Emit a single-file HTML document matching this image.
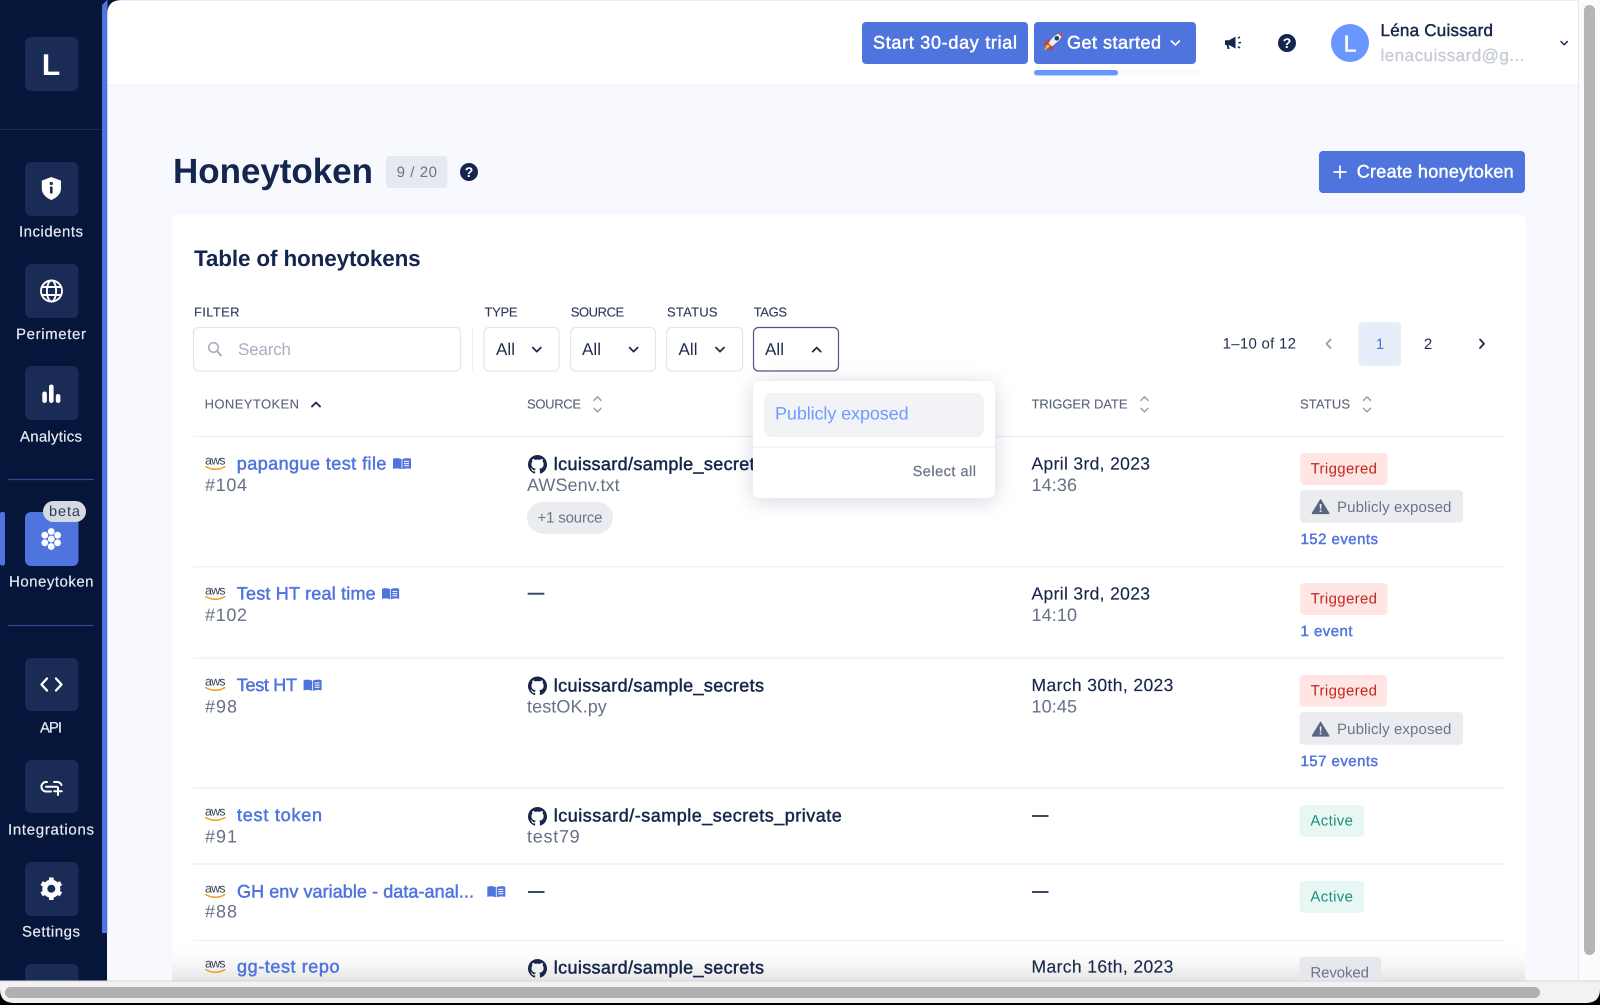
<!DOCTYPE html>
<html lang="en"><head><meta charset="utf-8"><title>Honeytoken</title>
<style>
html,body{margin:0;padding:0;background:#000;width:1600px;height:1005px;overflow:hidden}
svg{display:block}
text{font-family:"Liberation Sans",sans-serif;text-rendering:geometricPrecision}
.side{font-size:15px;fill:#e6e9f1;stroke:#e6e9f1;stroke-width:.2px}
.lab{font-size:13px;fill:#2a3858;stroke:#2a3858;stroke-width:.1px}
.th{font-size:13px;fill:#59637a;stroke:#59637a;stroke-width:.1px}
.all{font-size:17px;fill:#1f2d4d}
.name{font-size:18px;fill:#4f74de;stroke:#4f74de;stroke-width:.5px}
.repo{font-size:18px;fill:#17264a;stroke:#17264a;stroke-width:.5px}
.sub{font-size:18px;fill:#667087}
.date{font-size:17.5px;fill:#17264a;stroke:#17264a;stroke-width:.15px}
.tag{font-size:15px}
.tr{fill:#c0281f}.pe{fill:#6b7489}.ac{fill:#1b917f}
.ev{font-size:15px;fill:#4f74de;stroke:#4f74de;stroke-width:.45px}
.btn{font-size:18px;fill:#fff;stroke:#fff;stroke-width:.5px}
.ch{fill:none;stroke:#1f2d4d;stroke-width:1.8;stroke-linecap:round;stroke-linejoin:round}
.so{fill:none;stroke:#9aa1b1;stroke-width:1.5;stroke-linecap:round;stroke-linejoin:round}
.dv{stroke:#f0f1f4;stroke-width:1.5}
.dash{stroke:#3b4a6b;stroke-width:2}
</style></head><body>
<svg xmlns="http://www.w3.org/2000/svg" width="1600" height="1005" viewBox="0 0 1600 1005">
<defs>
<linearGradient id="fade" x1="0" y1="0" x2="0" y2="1"><stop offset="0" stop-color="#fff" stop-opacity="0"/><stop offset="1" stop-color="#e4e4e4" stop-opacity="1"/></linearGradient>
<filter id="sh" x="-20%" y="-30%" width="140%" height="170%"><feDropShadow dx="0" dy="3" stdDeviation="10" flood-color="#1a2850" flood-opacity=".16"/></filter>
<path id="gh" fill="#17264a" d="M8 0C3.58 0 0 3.58 0 8c0 3.54 2.29 6.53 5.47 7.59.4.07.55-.17.55-.38 0-.19-.01-.82-.01-1.49-2.01.37-2.53-.49-2.69-.94-.09-.23-.48-.94-.82-1.13-.28-.15-.68-.52-.01-.53.63-.01 1.08.58 1.23.82.72 1.21 1.87.87 2.33.66.07-.52.28-.87.51-1.07-1.78-.2-3.64-.89-3.64-3.95 0-.87.31-1.59.82-2.15-.08-.2-.36-1.02.08-2.12 0 0 .67-.21 2.2.82.64-.18 1.32-.27 2-.27.68 0 1.36.09 2 .27 1.53-1.04 2.2-.82 2.2-.82.44 1.1.16 1.92.08 2.12.51.56.82 1.27.82 2.15 0 3.07-1.87 3.75-3.65 3.95.29.25.54.73.54 1.48 0 1.07-.01 1.93-.01 2.2 0 .21.15.46.55.38A8.013 8.013 0 0016 8c0-4.42-3.58-8-8-8z"/>
<g id="book"><path fill="#4f74de" d="M0 1.2Q4.5 0 8.6 1.6V11.8Q4.5 10.2 0 11.4z"/><path fill="#4f74de" d="M9.4 1.6Q13.5 0 18 1.2V11.4Q13.5 10.2 9.4 11.8z"/><path fill="#fff" d="M11 3.4h5v1h-5zM11 5.6h5v1h-5zM11 7.8h5v1h-5z"/></g>
<path id="smile" fill="none" stroke="#f29a1f" stroke-width="1.5" stroke-linecap="round" d="M0.5 9.6Q10 15 19.5 9.6"/>
<g id="tri"><path fill="#5a6580" stroke="#5a6580" stroke-width="1.4" stroke-linejoin="round" d="M9 .8L17.2 14.4H.8z"/><path fill="#eaecf0" d="M8.1 5h1.8l-.3 5.2H8.4zM8.1 11.2h1.8v1.7H8.1z"/></g>
<g id="sort"><path class="so" d="M-3.5 -4L0 -7.5L3.5 -4"/><path class="so" d="M-3.5 4L0 7.5L3.5 4"/></g>
<path id="down" class="ch" d="M-4 -2L0 2L4 -2"/>
<path id="up" class="ch" d="M-4 2L0 -2L4 2"/>
</defs>

<!-- page background -->
<rect width="1600" height="1005" fill="#f8f9fe"/>

<!-- header -->
<rect x="107" y="0" width="1471" height="85" fill="#fff"/>
<rect x="107" y="0" width="1471" height="1" fill="#e8edf8"/>
<rect x="107" y="84.5" width="1471" height="1" fill="#e8edf8"/>
<rect x="862" y="22" width="166" height="42" rx="4" fill="#4f74de"/>
<text class="btn" x="873" y="48.7" textLength="144">Start 30-day trial</text>
<rect x="1034" y="22" width="162" height="42" rx="4" fill="#4f74de"/>
<g transform="translate(1044,32.5)">
<path fill="#f5c518" d="M3.5 11L0 18L6 14z"/>
<path fill="#e8341c" d="M5.5 7L1 9L0 13L5 12zM10 12.5L8.5 17L4.5 18L6 13.5z"/>
<path fill="#eef0f5" d="M18.5 0.5Q12 1 8 6L4.5 10.5L8 14L12.5 10Q18 6 18.5 0.5z"/>
<circle cx="12.8" cy="5.8" r="2.3" fill="#2d3a60"/>
<path fill="#e8341c" d="M18.5 0.5Q16 .7 14.6 1.5L17.4 4.3Q18.3 2.8 18.5 .5z"/>
</g>
<text class="btn" x="1067" y="48.7" textLength="94">Get started</text>
<path d="M1171.4 41L1175.4 45L1179.4 41" fill="none" stroke="#fff" stroke-width="1.6" stroke-linecap="round"/>
<rect x="1034" y="70" width="167" height="5.5" rx="2.7" fill="#f9fafc"/>
<rect x="1034" y="70" width="84" height="5.5" rx="2.7" fill="#6a97ff"/>
<!-- megaphone -->
<g transform="translate(1225,36)" fill="#14264d">
<path d="M0 4.2H4L10.5 0.6V12.6L4 9H3.6L4.6 13H2.6L1.6 9H0z"/>
<path d="M13 2.3L15 1M13.4 6.6H16M13 10.6L15 12" fill="none" stroke="#14264d" stroke-width="1.5"/>
</g>
<circle cx="1287" cy="43" r="9" fill="#14264d"/>
<text x="1287" y="48" text-anchor="middle" font-size="14" font-weight="700" fill="#fff">?</text>
<circle cx="1350" cy="43" r="19" fill="#6a97ff"/>
<text x="1350" y="51.5" text-anchor="middle" font-size="23" fill="#fff" stroke="#fff" stroke-width=".5">L</text>
<text x="1380.5" y="36" font-size="17" fill="#17264a" stroke="#17264a" stroke-width=".45" textLength="112.5">Léna Cuissard</text>
<text x="1380.5" y="61" font-size="17" fill="#c5cad5" stroke="#c5cad5" stroke-width=".3" textLength="144">lenacuissard@g...</text>
<path d="M1561 41.5L1564.2 44.7L1567.4 41.5" fill="none" stroke="#14264d" stroke-width="1.4" stroke-linecap="round"/>

<!-- page title -->
<text x="173" y="183" font-size="35" font-weight="700" fill="#14264d" textLength="200">Honeytoken</text>
<rect x="386" y="156" width="61.5" height="32" rx="4" fill="#e6e9f0"/>
<text x="396.6" y="177" font-size="15" fill="#6b7489" textLength="40.4">9 / 20</text>
<circle cx="469" cy="172" r="9" fill="#14264d"/>
<text x="469" y="177" text-anchor="middle" font-size="14" font-weight="700" fill="#fff">?</text>
<rect x="1319" y="151" width="206" height="42" rx="4" fill="#4f74de"/>
<path d="M1340 165.5V178.5M1333.5 172H1346.5" stroke="#fff" stroke-width="1.7" fill="none"/>
<text class="btn" x="1356.7" y="177.3" textLength="157">Create honeytoken</text>

<!-- card -->
<rect x="172" y="215" width="1353.5" height="780" rx="6" fill="#fff"/>
<text x="194" y="266" font-size="22.5" font-weight="700" fill="#14264d" textLength="226.7">Table of honeytokens</text>

<!-- filters -->
<text class="lab" x="194" y="316.7" textLength="45.5">FILTER</text>
<text class="lab" x="484.5" y="316.7" textLength="33">TYPE</text>
<text class="lab" x="570.7" y="316.7" textLength="53.5">SOURCE</text>
<text class="lab" x="667" y="316.7" textLength="50.6">STATUS</text>
<text class="lab" x="753.7" y="316.7" textLength="33.3">TAGS</text>

<rect x="193.5" y="327.5" width="267" height="43.5" rx="5" fill="#fff" stroke="#e2e5ec" stroke-width="1.2"/>
<circle cx="213.5" cy="347.5" r="4.8" fill="none" stroke="#a2a9b8" stroke-width="1.5"/>
<path d="M217 351L221 355.5" stroke="#a2a9b8" stroke-width="1.8" stroke-linecap="round"/>
<text x="238" y="355" font-size="17" fill="#a9b0bf" textLength="53">Search</text>
<path d="M472.5 327V371" stroke="#eef0f4"/>
<rect x="484" y="327.5" width="75" height="43.5" rx="5" fill="#fff" stroke="#e2e5ec" stroke-width="1.2"/>
<text class="all" x="496" y="355" textLength="19">All</text>
<use href="#down" transform="translate(536.8,349.6)"/>
<rect x="570.7" y="327.5" width="84.8" height="43.5" rx="5" fill="#fff" stroke="#e2e5ec" stroke-width="1.2"/>
<text class="all" x="582" y="355" textLength="19">All</text>
<use href="#down" transform="translate(633.6,349.6)"/>
<rect x="666.7" y="327.5" width="75.9" height="43.5" rx="5" fill="#fff" stroke="#e2e5ec" stroke-width="1.2"/>
<text class="all" x="678.5" y="355" textLength="19">All</text>
<use href="#down" transform="translate(720,349.6)"/>
<rect x="753.5" y="327.5" width="85" height="43.5" rx="5" fill="#fff" stroke="#4a5a7c" stroke-width="1.2"/>
<text class="all" x="765" y="355" textLength="19">All</text>
<use href="#up" transform="translate(816.7,349.6)"/>

<!-- pagination -->
<text x="1222.6" y="348.7" font-size="15" fill="#1f2d4d" textLength="73.4">1–10 of 12</text>
<path d="M1330.5 339.5L1326.5 343.7L1330.5 348" fill="none" stroke="#969daf" stroke-width="1.8" stroke-linecap="round" stroke-linejoin="round"/>
<rect x="1358.4" y="322" width="42.6" height="44" rx="4" fill="#e8edfa"/>
<text x="1380" y="349" text-anchor="middle" font-size="15" fill="#4f74de">1</text>
<text x="1428" y="349" text-anchor="middle" font-size="15" fill="#1f2d4d">2</text>
<path d="M1480 339.5L1484 343.7L1480 348" fill="none" stroke="#1f2d4d" stroke-width="1.8" stroke-linecap="round" stroke-linejoin="round"/>

<!-- table header -->
<text class="th" x="204.6" y="408.3" textLength="94.4">HONEYTOKEN</text>
<path d="M312 406.5L316 402.5L320 406.5" fill="none" stroke="#1f2d4d" stroke-width="1.9" stroke-linecap="round" stroke-linejoin="round"/>
<text class="th" x="527" y="408.3" textLength="54">SOURCE</text>
<use href="#sort" transform="translate(597.5,404.3)"/>
<text class="th" x="1031.5" y="408.3" textLength="96">TRIGGER DATE</text>
<use href="#sort" transform="translate(1144.5,404.3)"/>
<text class="th" x="1300" y="408.3" textLength="50">STATUS</text>
<use href="#sort" transform="translate(1367,404.3)"/>
<path class="dv" d="M193 436.5H1504"/>

<!-- row 1 -->
<text x="205" y="464.5" font-size="12.5" fill="#3a4558" textLength="20.5">aws</text>
<use href="#smile" transform="translate(205.3,457)"/>
<text class="name" x="236.8" y="469.3" textLength="149.6">papangue test file</text>
<use href="#book" transform="translate(393,457.5)"/>
<text class="sub" x="205" y="491" textLength="42">#104</text>
<use href="#gh" transform="translate(528,455) scale(1.19)"/>
<text class="repo" x="553.8" y="470" textLength="210.2">lcuissard/sample_secrets</text>
<text class="sub" x="527" y="491" textLength="92.6">AWSenv.txt</text>
<rect x="527" y="501.7" width="86" height="32" rx="16" fill="#eaecf0"/>
<text class="tag pe" x="537.5" y="522.7" textLength="65">+1 source</text>
<text class="date" x="1031.5" y="469.5" textLength="118.5">April 3rd, 2023</text>
<text class="sub" x="1031.5" y="491" textLength="45.5">14:36</text>
<rect x="1300" y="453" width="87.5" height="32" rx="4" fill="#ffe5e3"/>
<text class="tag tr" x="1310.6" y="473.5" textLength="66.4">Triggered</text>
<rect x="1300" y="490" width="163" height="32.7" rx="4" fill="#eaecf0"/>
<use href="#tri" transform="translate(1311.6,499)"/>
<text class="tag pe" x="1337" y="512" textLength="114.4">Publicly exposed</text>
<text class="ev" x="1300.5" y="544" textLength="77.5">152 events</text>
<path class="dv" d="M193 566.7H1504"/>

<!-- row 2 -->
<text x="205" y="594.5" font-size="12.5" fill="#3a4558" textLength="20.5">aws</text>
<use href="#smile" transform="translate(205.3,587)"/>
<text class="name" x="236.8" y="599.3" textLength="138.9">Test HT real time</text>
<use href="#book" transform="translate(382,587.5) scale(.95,1)"/>
<text class="sub" x="205" y="621" textLength="42">#102</text>
<path class="dash" d="M527.7 593.7H544.3"/>
<text class="date" x="1031.5" y="599.5" textLength="118.5">April 3rd, 2023</text>
<text class="sub" x="1031.5" y="621" textLength="45.5">14:10</text>
<rect x="1300" y="583" width="87.5" height="32" rx="4" fill="#ffe5e3"/>
<text class="tag tr" x="1310.6" y="603.5" textLength="66.4">Triggered</text>
<text class="ev" x="1300.5" y="636" textLength="52">1 event</text>
<path class="dv" d="M193 658H1504"/>

<!-- row 3 -->
<text x="205" y="685.5" font-size="12.5" fill="#3a4558" textLength="20.5">aws</text>
<use href="#smile" transform="translate(205.3,678)"/>
<text class="name" x="236.8" y="691" textLength="60.2">Test HT</text>
<use href="#book" transform="translate(303.6,679)"/>
<text class="sub" x="205" y="712.7" textLength="32">#98</text>
<use href="#gh" transform="translate(528,676.5) scale(1.19)"/>
<text class="repo" x="553.8" y="691.7" textLength="210.2">lcuissard/sample_secrets</text>
<text class="sub" x="527" y="712.7" textLength="79.8">testOK.py</text>
<text class="date" x="1031.5" y="691" textLength="141.9">March 30th, 2023</text>
<text class="sub" x="1031.5" y="712.7" textLength="45.5">10:45</text>
<rect x="1299.5" y="675" width="87.5" height="31.7" rx="4" fill="#ffe5e3"/>
<text class="tag tr" x="1310.6" y="695.7" textLength="66.4">Triggered</text>
<rect x="1299.5" y="712" width="163.5" height="32.7" rx="4" fill="#eaecf0"/>
<use href="#tri" transform="translate(1311.6,721.5)"/>
<text class="tag pe" x="1337" y="734" textLength="114.4">Publicly exposed</text>
<text class="ev" x="1300.5" y="766" textLength="77.5">157 events</text>
<path class="dv" d="M193 788H1504"/>

<!-- row 4 -->
<text x="205" y="815.5" font-size="12.5" fill="#3a4558" textLength="20.5">aws</text>
<use href="#smile" transform="translate(205.3,808)"/>
<text class="name" x="237" y="821.2" textLength="85">test token</text>
<text class="sub" x="205" y="842.3" textLength="32">#91</text>
<use href="#gh" transform="translate(528,807) scale(1.19)"/>
<text class="repo" x="553.8" y="821.7" textLength="288">lcuissard/-sample_secrets_private</text>
<text class="sub" x="527" y="842.7" textLength="52.7">test79</text>
<path class="dash" d="M1032 816H1048.5"/>
<rect x="1299.5" y="805" width="64.5" height="31.7" rx="4" fill="#e8f7f4"/>
<text class="tag ac" x="1310.4" y="825.7" textLength="42.6">Active</text>
<path class="dv" d="M193 864H1504"/>

<!-- row 5 -->
<text x="205" y="892.5" font-size="12.5" fill="#3a4558" textLength="20.5">aws</text>
<use href="#smile" transform="translate(205.3,885)"/>
<text class="name" x="237" y="897.3" textLength="237">GH env variable - data-anal...</text>
<use href="#book" transform="translate(487.3,885.5)"/>
<text class="sub" x="205" y="917.7" textLength="32">#88</text>
<path class="dash" d="M528 892H544.5"/>
<path class="dash" d="M1032 892H1048.5"/>
<rect x="1299.5" y="881" width="64.5" height="32" rx="4" fill="#e8f7f4"/>
<text class="tag ac" x="1310.4" y="901.7" textLength="42.6">Active</text>
<path class="dv" d="M193 940.5H1504"/>

<!-- row 6 -->
<rect x="172" y="942" width="1353.5" height="39" fill="url(#fade)"/>
<text x="205" y="967.5" font-size="12.5" fill="#3a4558" textLength="20.5">aws</text>
<use href="#smile" transform="translate(205.3,960)"/>
<text class="name" x="237" y="972.3" textLength="102.5">gg-test repo</text>
<use href="#gh" transform="translate(528,959) scale(1.19)"/>
<text class="repo" x="553.8" y="973.3" textLength="210.2">lcuissard/sample_secrets</text>
<text class="date" x="1031.5" y="972.3" textLength="141.9">March 16th, 2023</text>
<rect x="1299.5" y="956.7" width="81.5" height="32" rx="4" fill="#e6e8ed"/>
<text class="tag pe" x="1310.4" y="977.7" textLength="58.6">Revoked</text>

<!-- dropdown -->
<rect x="753" y="381" width="242" height="117" rx="7" fill="#fff" filter="url(#sh)"/>
<rect x="764" y="393" width="220" height="44" rx="8" fill="#f2f3f6"/>
<text x="775" y="419.7" font-size="18" fill="#6f9bff" textLength="133.6">Publicly exposed</text>
<path d="M753 447.3H995" stroke="#eceef2"/>
<text x="912.6" y="476" font-size="14.5" fill="#6b7489" stroke="#6b7489" stroke-width=".25" textLength="63.4">Select all</text>

<!-- sidebar -->
<rect x="0" y="0" width="107" height="981" fill="#06163a"/>
<rect x="102" y="0" width="5.3" height="933" fill="#4f74de"/>
<path d="M107.3 0H120Q107.3 1 107.3 14z" fill="#06163a"/>
<path d="M102 0H107L102 5z" fill="#06163a"/>
<path d="M0 129.5H102" stroke="#1a2c55"/>

<rect x="25" y="37" width="53.5" height="54" rx="6" fill="#1a2c55"/>
<text x="51" y="75" text-anchor="middle" font-size="30" font-weight="700" fill="#fff">L</text>

<rect x="25" y="162" width="53.5" height="54" rx="6" fill="#1a2c55"/>
<path fill="#fff" d="M51.3 177L61 180.6V188Q61 196 51.3 200Q41.8 196 41.8 188V180.6z"/>
<circle cx="51.3" cy="183.5" r="1.6" fill="#1a2c55"/><rect x="50" y="186.5" width="2.6" height="7" rx=".6" fill="#1a2c55"/>
<text class="side" x="19" y="236.7" textLength="64">Incidents</text>

<rect x="25" y="264" width="53.5" height="54" rx="6" fill="#1a2c55"/>
<g fill="none" stroke="#fff" stroke-width="1.9"><circle cx="51.5" cy="291" r="10.5"/><ellipse cx="51.5" cy="291" rx="4.6" ry="10.5"/><path d="M41.8 287H61.2M41.8 295H61.2"/></g>
<text class="side" x="16" y="339" textLength="70">Perimeter</text>

<rect x="25" y="366" width="53.5" height="54" rx="6" fill="#1a2c55"/>
<rect x="42.3" y="391.5" width="4.6" height="11.5" rx="2.3" fill="#fff"/><rect x="49" y="384.5" width="4.6" height="18.5" rx="2.3" fill="#fff"/><rect x="55.8" y="394" width="4.6" height="9" rx="2.3" fill="#fff"/>
<text class="side" x="20" y="441.5" textLength="62">Analytics</text>

<path d="M8 479.5H94" stroke="#2e4a8f" stroke-width="1.2"/>

<rect x="0" y="512" width="5" height="53.5" rx="2" fill="#4f74de"/>
<rect x="25" y="512" width="53.5" height="54" rx="6" fill="#4f74de"/>
<g fill="#fff"><circle cx="51.2" cy="539" r="3.4"/><circle cx="51.2" cy="531.5" r="3.4"/><circle cx="51.2" cy="546.5" r="3.4"/><circle cx="44.8" cy="535.2" r="3.4"/><circle cx="57.6" cy="535.2" r="3.4"/><circle cx="44.8" cy="542.8" r="3.4"/><circle cx="57.6" cy="542.8" r="3.4"/></g>
<rect x="43" y="501" width="43" height="21" rx="10.5" fill="#d5d9e3"/>
<text x="49" y="516" font-size="14.5" fill="#2d3a57" textLength="31">beta</text>
<text class="side" x="9" y="586.5" textLength="84.5">Honeytoken</text>

<path d="M8 625.5H94" stroke="#2e4a8f" stroke-width="1.2"/>

<rect x="25" y="658" width="53.5" height="53" rx="6" fill="#1a2c55"/>
<path d="M47 678.5L41.5 684.5L47 690.5M56 678.5L61.5 684.5L56 690.5" fill="none" stroke="#fff" stroke-width="2.3" stroke-linecap="round" stroke-linejoin="round"/>
<text class="side" x="40" y="732.3" textLength="22">API</text>

<rect x="25" y="760" width="53.5" height="53" rx="6" fill="#1a2c55"/>
<path d="M47 782H45.5A4.8 4.8 0 0 0 45.5 791.5H51M46 786.8H57M54 782H57A4.8 4.8 0 0 1 61.5 785" fill="none" stroke="#fff" stroke-width="2" stroke-linecap="round"/>
<path d="M58 787.5V795M54.2 791.2H61.8" stroke="#fff" stroke-width="2" stroke-linecap="round"/>
<text class="side" x="8" y="834.3" textLength="86">Integrations</text>

<rect x="25" y="862" width="53.5" height="54" rx="6" fill="#1a2c55"/>
<circle cx="51.3" cy="888.7" r="6.5" fill="none" stroke="#fff" stroke-width="5"/>
<path d="M51.3 877.5V881M51.3 896.5V900M41.6 883.1L44.6 884.8M58 892.6L61 894.3M41.6 894.3L44.6 892.6M58 884.8L61 883.1" stroke="#fff" stroke-width="4.6" stroke-linecap="butt"/>
<text class="side" x="22" y="936.7" textLength="58">Settings</text>

<rect x="25" y="964" width="53.5" height="20" rx="6" fill="#1a2c55"/>

<!-- vertical scrollbar -->
<rect x="1578" y="0" width="22" height="981" fill="#fbfbfb"/>
<rect x="1578" y="0" width="1" height="981" fill="#e8e8ea"/>
<rect x="1584" y="5" width="11" height="950" rx="5.5" fill="#b5b5b5"/>

<!-- horizontal scrollbar & window bottom -->
<rect x="0" y="981" width="1600" height="24" fill="#000"/>
<path d="M0 981H1600V989Q1600 1003 1586 1003H14Q0 1003 0 989z" fill="#f2f2f2"/>
<path d="M0 981H1600" stroke="#d6d6d6"/>
<rect x="5" y="987" width="1535" height="11" rx="5.5" fill="#b0b0b0"/>
</svg>
</body></html>
